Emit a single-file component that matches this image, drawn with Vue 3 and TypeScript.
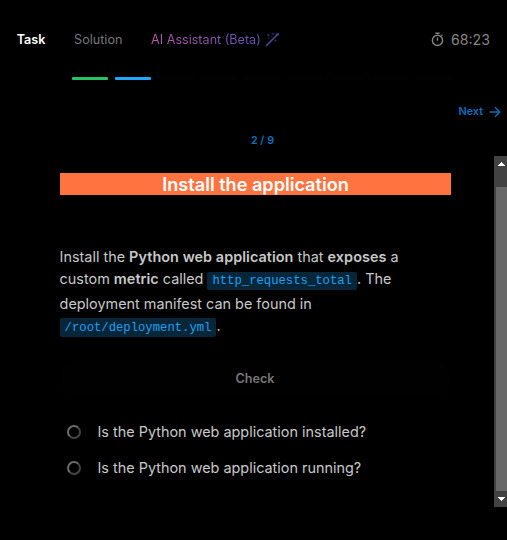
<script setup lang="ts">
interface Tab { label: string; kind: string }

const tabs: Tab[] = [
  { label: 'Task', kind: 'active' },
  { label: 'Solution', kind: 'plain' },
]
const total = 9
const current = 2
const checks: string[] = [
  'Is the Python web application installed?',
  'Is the Python web application running?',
]

function stepClass(n: number): string {
  if (n < current) return 'done'
  return n === current ? 'current' : 'todo'
}
</script>

<template>
  <div class="panel">
    <header class="header">
      <nav class="tabs">
        <a v-for="t in tabs" :key="t.label" class="tab" :class="t.kind">{{ t.label }}</a>
        <a class="tab ai">
          <span class="ai-label">AI Assistant (Beta)</span>
          <svg class="wand" width="15" height="15" viewBox="0 0 15 15" fill="none" stroke="#4b499c">
            <path d="M1 14 13.500 1.500" stroke-width="1.600" />
            <path d="M2 3.200h3M3.500 1.700v3M6.500 1.800h3M8 .8v2.200M10.500 7.500v2.400M9.300 8.700h2.400M6 5h1.500M3 6.500h1" stroke-width="1.200" opacity=".5" />
            <path d="M11.500 1.500 13.500 3.500" stroke-width="1.200" />
          </svg>
        </a>
      </nav>
      <div class="timer">
        <svg width="13" height="15" viewBox="0 0 13 15" fill="none" stroke="#858585" stroke-width="1.400">
          <circle cx="6.500" cy="8.400" r="5.100" />
          <path d="M4.400 1.200h4.200M6.500 5.400v3.400M10.300 3.700l1-1" />
        </svg>
        <span>68:23</span>
      </div>
    </header>

    <div class="steps">
      <i v-for="n in total" :key="n" class="step" :class="stepClass(n)"></i>
    </div>

    <div class="next">
      <span>Next</span>
      <svg width="12" height="12" viewBox="0 0 12 12" fill="none" stroke="#086fbd" stroke-width="1.300">
        <path d="M.5 6h10M6 1.200 10.800 6 6 10.800" />
      </svg>
    </div>
    <div class="count">{{ current }} / {{ total }}</div>

    <div class="body">
      <main class="content">
        <h1 class="title">Install the application</h1>
        <p class="text">
          Install the <b>Python web application</b> that <b>exposes</b> a<br />
          custom <b>metric</b> called <code>http_requests_total</code>. The
        </p>
        <p class="text second">
          deployment manifest can be found in<br />
          <code>/root/deployment.yml</code>.
        </p>
        <button class="check">Check</button>
        <ul class="checks">
          <li v-for="c in checks" :key="c">
            <span class="ring"></span>
            <span class="question">{{ c }}</span>
          </li>
        </ul>
      </main>
      <div class="scrollbar">
        <svg class="arrow up" width="13" height="31" viewBox="0 0 13 31" shape-rendering="crispEdges">
          <path fill="#fff" d="M7 6h1v1h1v1h1v1h1v1H4V9h1V8h1V7h1z" />
        </svg>
        <div class="thumb"></div>
        <svg class="arrow" width="13" height="16" viewBox="0 0 13 16" shape-rendering="crispEdges">
          <path fill="#fff" d="M4 6h7v1h-1v1H9v1H8v1H7V9H6V8H5V7H4z" />
        </svg>
      </div>
    </div>
  </div>
</template>

<style>
body { background: #000; }
</style>

<style scoped>
.panel {
  box-sizing: border-box;
  width: 507px;
  height: 540px;
  overflow: hidden;
  background: #000;
  font-family: Inter, sans-serif;
  color: #c8c8c8;
}
.header {
  display: flex;
  align-items: center;
  justify-content: space-between;
  height: 77px;
  padding: 2px 17px 0 16.700px;
  box-sizing: border-box;
}
.tabs { display: flex; gap: 28.700px; align-items: center; }
.tab { font-size: 12.600px; line-height: 20px; color: #777; }
.tab.active { color: #fff; font-weight: 600; }
.tab.ai { display: flex; align-items: center; gap: 4px; }
.ai-label {
  background: linear-gradient(90deg, #b558a6, #6352b6);
  background-clip: text;
  -webkit-background-clip: text;
  color: transparent;
}
.timer { display: flex; align-items: center; gap: 7px; font-size: 14.200px; color: #858585; }
.steps { display: flex; gap: 7px; padding-left: 72px; }
.step { width: 36px; height: 3px; border-radius: 1px; background: #020202; }
.step.done { background: #26c363; }
.step.current { background: #1ea7fd; }
.next {
  display: flex;
  justify-content: flex-end;
  align-items: center;
  gap: 5.500px;
  height: 16px;
  margin-top: 24px;
  padding-right: 6.500px;
  font-size: 10.800px;
  font-weight: 600;
  color: #086fbd;
}
.next span { padding-bottom: 2px; }
.count {
  margin-top: 13px;
  padding-left: 18px;
  height: 16px;
  line-height: 16px;
  text-align: center;
  font-size: 10.800px;
  font-weight: 600;
  color: #086fbd;
}
.body { display: flex; height: 351px; margin-top: 7px; }
.content { width: 391px; padding: 17px 43px 0 60px; }
.title {
  margin: 0 0 51px;
  height: 22px;
  line-height: 22px;
  background: #ff7340;
  color: #fff;
  font-size: 18.100px;
  font-weight: 600;
  text-align: center;
}
.text { margin: 0 0 0 -.4px; font-size: 14.400px; line-height: 22px; white-space: nowrap; height: 47px; }
.text.second { height: 67px; }
.text.second code { padding: 3px 5px 2px; }
.text b { font-weight: 600; letter-spacing: .06px; }
code {
  padding: 2px 5px;
  border-radius: 2px;
  background: #08263a;
  color: #1ea0f0;
  font-family: "Liberation Mono", monospace;
  font-size: 12.240px;
}
.text.second { line-height: 21.800px; }
.check {
  display: block;
  width: 391px;
  height: 38px;
  padding: 0 1px 2px 0;
  border: 0;
  border-radius: 19px;
  background: #010101;
  color: #777;
  font: 600 12.600px Inter, sans-serif;
}
.checks { list-style: none; margin: 16px 0 0; padding: 0 0 0 7px; }
.checks li { display: flex; align-items: center; gap: 16.500px; height: 36px; font-size: 14.420px; white-space: nowrap; }
.question { padding-bottom: 1px; }
.ring {
  box-sizing: border-box;
  width: 14px;
  height: 14px;
  border: 2px solid #444;
  border-top-color: #6c6c6c;
  border-left-color: #6c6c6c;
  border-radius: 50%;
}
.scrollbar { display: flex; flex-direction: column; width: 13px; background: #424242; }
.thumb { flex: 1; margin-left: 2px; background: #686868; }
.arrow { display: block; }
</style>
